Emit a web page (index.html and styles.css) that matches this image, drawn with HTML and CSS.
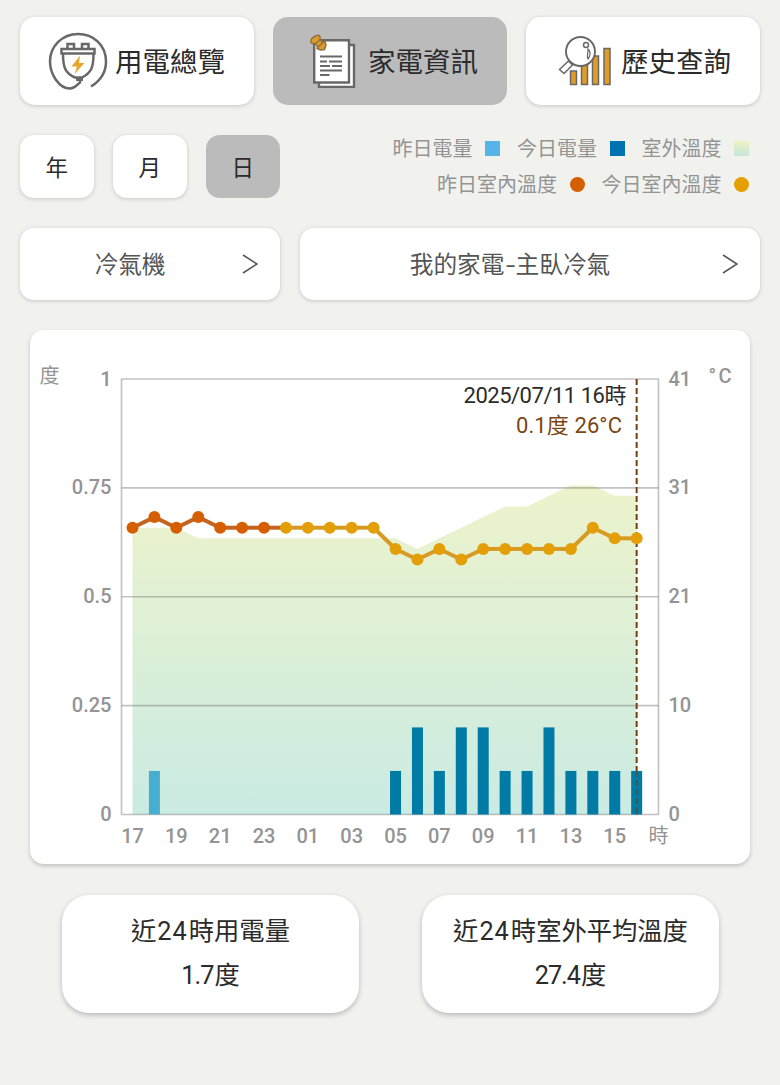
FILE: index.html
```
<!DOCTYPE html>
<html lang="zh-Hant">
<head>
    <meta charset="UTF-8">
    <meta name="viewport" content="width=device-width, initial-scale=1.0">
    <title>家電資訊</title>
    <link rel="stylesheet" href="styles.css">
</head>
<body>

    <nav class="tabs">
        <button class="tab">
            <svg class="tab-icon plug" width="60" height="60" viewBox="0 0 60 60" fill="none" stroke="#686868" stroke-width="2.5">
                <path d="M43 55.500 C52 50 58 41 58 30.500 C58 14 45.500 3 30 3 C14.500 3 2 15 2 30.500 C2 43 11 57.500 22 57.500 C27 57.500 28.500 54 32 51.500 V47"/>
                <path d="M15 23 C15 37 17.500 42 27 46.500 H34 C43 42 45.500 37 45.500 23"/>
                <path d="M13.500 18 H46.500 V22.500 H13.500 Z"/>
                <path d="M19.500 17 V13 H26 V17 M34 17 V13 H40.500 V17"/>
                <path d="M28 48 H35" stroke-width="4"/>
                <path d="M32 24.500 L23.500 35.500 H29 L26.500 43 L36.500 32 H31 Z" fill="#e6a62c" stroke="none"/>
            </svg>
            <span>用電總覽</span>
        </button>
        <button class="tab active">
            <svg class="tab-icon" width="46" height="54" viewBox="0 0 46 54" fill="#fff" stroke="#686868" stroke-width="2.400">
                <path d="M9 11 H44 V53 H9 Z"/>
                <path d="M4.200 6.200 H39 V48.500 H4.200 Z"/>
                <path d="M10 22.500 H32 M10 27.500 H17 M19 27.500 H32 M10 32 H20 M22 32 H32 M10 36.500 H32 M10 41 H19.500" stroke-width="1.800"/>
                <g fill="#dc9a2d" stroke="#8f713c" stroke-width="1.500">
                    <path d="M7 14.500 C7.500 10 10.500 7.500 15 7.500 L16 11 L14.500 15.500 L10.500 16 Z"/>
                    <path d="M4.500 9 L8 13 L13 8.500 L9 4.500 Z"/>
                    <ellipse cx="5.500" cy="5.500" rx="5.300" ry="3.200" transform="rotate(-38 5.500 5.500)"/>
                </g>
            </svg>
            <span>家電資訊</span>
        </button>
        <button class="tab">
            <svg class="tab-icon" width="54" height="50" viewBox="0 0 54 50" stroke="#686868" stroke-width="1.500">
                <path d="M12.500 35 H18.500 V48.500 H12.500 Z M23.500 28 H29.500 V48.500 H23.500 Z M34.500 20 H40.500 V48.500 H34.500 Z M46 12.500 H52 V48.500 H46 Z" fill="#e09c26"/>
                <path d="M10.500 25 L14.500 29 L6 37.500 L1.500 33.500 Z" fill="#fff"/>
                <circle cx="22.500" cy="15.500" r="14.500" fill="#fff" stroke-width="1.900"/>
                <circle cx="28" cy="9" r="2.500" fill="none"/>
                <path d="M30 13 C33 15.500 32.500 20 30 23 C28.500 22 30 19 30 13 Z" fill="none" stroke-width="1.200"/>
            </svg>
            <span>歷史查詢</span>
        </button>
    </nav>

    <div class="filters">
        <div class="ranges">
            <button class="range"><span>年</span></button>
            <button class="range"><span>月</span></button>
            <button class="range active"><span>日</span></button>
        </div>
        <div class="legend">
            <div class="legend-row">
                <span>昨日電量</span><i class="mark yesterday"></i>
                <span>今日電量</span><i class="mark today"></i>
                <span>室外溫度</span><i class="mark outdoor"></i>
            </div>
            <div class="legend-row">
                <span>昨日室內溫度</span><i class="mark dot yesterday-temp"></i>
                <span>今日室內溫度</span><i class="mark dot today-temp"></i>
            </div>
        </div>
    </div>

    <div class="selects">
        <button class="select">
            <span>冷氣機</span>
            <svg class="arrow" width="16" height="20" viewBox="0 0 16 20"><path d="M1 1 L15 10 L1 19"/></svg>
        </button>
        <button class="select">
            <span>我的家電<b class="dash">-</b>主臥冷氣</span>
            <svg class="arrow" width="16" height="20" viewBox="0 0 16 20"><path d="M1 1 L15 10 L1 19"/></svg>
        </button>
    </div>

    <div class="chart-card">
        <svg class="chart" id="chart" width="720" height="534" viewBox="0 0 720 534">
            <defs>
                <linearGradient id="outdoor" x1="0" y1="155" x2="0" y2="484" gradientUnits="userSpaceOnUse">
                    <stop offset="0" stop-color="#edf3cb"/>
                    <stop offset="1" stop-color="#caebe3"/>
                </linearGradient>
            </defs>
        </svg>
    </div>

    <div class="summary">
        <div class="summary-card">
            <div>近<span class="num">24</span>時用電量</div>
            <div><span class="value">1.7</span>度</div>
        </div>
        <div class="summary-card">
            <div>近<span class="num">24</span>時室外平均溫度</div>
            <div><span class="value">27.4</span>度</div>
        </div>
    </div>

    <script>
        const chart = document.getElementById('chart');
        const left = 91.5, right = 628.5, top0 = 49, bottom = 484.5;
        const firstX = 102.5, step = 21.92;

        // 17時 ~ 16時
        const usage = [0, 0.1, 0, 0, 0, 0, 0, 0, 0, 0, 0, 0, 0.1, 0.2, 0.1, 0.2, 0.2, 0.1, 0.1, 0.2, 0.1, 0.1, 0.1, 0.1];
        const indoor = [27, 28, 27, 28, 27, 27, 27, 27, 27, 27, 27, 27, 25, 24, 25, 24, 25, 25, 25, 25, 25, 27, 26, 26];
        const outdoor = [27, 27, 27, 26, 26, 26, 26, 26, 26, 26, 26, 26, 26, 25, 26, 27, 28, 29, 29, 30, 31, 31, 30, 30];
        const midnight = 7;

        const x = i => firstX + i * step;
        const tempY = t => bottom - t * (bottom - top0) / 41;
        const usageY = u => bottom - u * (bottom - top0);

        function draw(tag, attrs, text) {
            const el = document.createElementNS('http://www.w3.org/2000/svg', tag);
            for (let key in attrs) el.setAttribute(key, attrs[key]);
            if (text) el.textContent = text;
            chart.appendChild(el);
        }

        // outdoor temperature area
        const area = outdoor.map((t, i) => `${x(i)},${tempY(t)}`).join(' ');
        draw('polygon', { points: `${x(0)},${bottom} ${area} ${x(23)},${bottom}`, fill: 'url(#outdoor)' });

        // grid and axis labels
        const leftLabels = ['1', '0.75', '0.5', '0.25', '0'];
        const rightLabels = ['41', '31', '21', '10', '0'];
        leftLabels.forEach((label, i) => {
            const y = top0 + i * (bottom - top0) / 4;
            draw('line', { class: 'grid', x1: left, x2: right, y1: y, y2: y });
            draw('text', { class: 'label end', x: 81.5, y: y + 6.5 }, label);
            draw('text', { class: 'label', x: 638.5, y: y + 6.5 }, rightLabels[i]);
        });
        draw('line', { class: 'grid', x1: left, x2: left, y1: top0, y2: bottom });
        draw('line', { class: 'grid', x1: right, x2: right, y1: top0, y2: bottom });

        for (let i = 0; i < 24; i += 2) {
            draw('text', { class: 'label middle', x: x(i), y: 513 }, String((17 + i) % 24).padStart(2, '0'));
        }
        draw('text', { class: 'label unit middle', x: 628.5, y: 513 }, '時');
        draw('text', { class: 'label unit', x: 9.5, y: 53 }, '度');
        draw('text', { class: 'label', x: 678.5, y: 53, textLength: 23 }, '°C');

        // selected hour
        draw('line', { class: 'cursor', x1: x(23), x2: x(23), y1: top0, y2: bottom });

        usage.forEach((u, i) => {
            if (!u) return;
            draw('rect', { class: i < midnight ? 'bar old' : 'bar', x: x(i) - 5.5, y: usageY(u), width: 11, height: bottom - usageY(u) });
        });
        draw('line', { class: 'cursor faded', x1: x(23), x2: x(23), y1: usageY(0.1), y2: bottom });

        // indoor temperature
        for (let i = 0; i < 23; i++) {
            draw('line', { class: i < midnight ? 'temp old' : 'temp', x1: x(i), y1: tempY(indoor[i]), x2: x(i + 1), y2: tempY(indoor[i + 1]) });
        }
        indoor.forEach((t, i) => {
            draw('circle', { class: i < midnight ? 'point old' : 'point', cx: x(i), cy: tempY(t), r: 6 });
        });

        draw('text', { class: 'tip', x: 433.5, y: 73, textLength: 163 }, '2025/07/11 16時');
        draw('text', { class: 'tip reading', x: 486, y: 102.5, textLength: 106 }, '0.1度 26°C');
    </script>

</body>
</html>
```

FILE: styles.css
```
* {
    box-sizing: border-box;
}

body {
    margin: 0;
    padding: 17px 20px 0;
    min-height: 1085px;
    background-color: #f1f2ee;
    font-family: Roboto, "Noto Sans CJK TC", sans-serif;
    color: #2b2b2b;
}

button {
    border: none;
    padding: 0;
    font-family: inherit;
    color: inherit;
    background-color: #fff;
    box-shadow: 0 1px 4px rgba(0, 0, 0, 0.18);
    cursor: pointer;
}

.tabs {
    display: grid;
    grid-template-columns: repeat(3, 1fr);
    gap: 19px;
}

.tab {
    display: flex;
    justify-content: flex-end;
    align-items: center;
    gap: 12px;
    height: 88px;
    padding-right: 29px;
    border-radius: 15px;
    font-size: 27.5px;
}

.tab span {
    padding-bottom: 3px;
}

.plug {
    margin-right: -5px;
}

.tab:last-child .tab-icon {
    margin-right: -3px;
}

.tab.active,
.range.active {
    background-color: #bbb;
    box-shadow: none;
}

.filters {
    display: flex;
    justify-content: space-between;
    height: 63px;
    margin-top: 30px;
}

.ranges {
    display: flex;
    gap: 19.5px;
}

.range {
    width: 73.5px;
    height: 63px;
    padding-bottom: 2px;
    border-radius: 14px;
    font-size: 22.5px;
}

.legend {
    padding-right: 11px;
    color: #949494;
    font-size: 20px;
}

.legend-row {
    display: flex;
    justify-content: flex-end;
    align-items: center;
    height: 36px;
    margin-top: -5px;
}

.legend-row + .legend-row {
    margin-top: 0;
}

.legend-row span {
    padding-bottom: 2px;
}

.mark {
    width: 15px;
    height: 15px;
    margin: 0 17px 0 12.5px;
}

.mark:last-child {
    margin-right: 0;
}

.dot {
    border-radius: 50%;
}

.yesterday {
    background-color: #56b4e6;
}

.today {
    background-color: #0072b0;
}

.outdoor {
    background: linear-gradient(#edf3c0, #c5e6dc);
}

.yesterday-temp {
    background-color: #d55e00;
}

.today-temp {
    background-color: #e69f00;
}

.selects {
    display: grid;
    grid-template-columns: 260px 1fr;
    gap: 20px;
    margin-top: 30px;
}

.select {
    display: flex;
    align-items: center;
    height: 72px;
    padding-right: 22px;
    border-radius: 14px;
    font-size: 23.7px;
    color: #555;
}

.select span {
    flex: 1;
    padding: 0 2px 2px 0;
}

.dash {
    display: inline-block;
    width: 11px;
    font-weight: normal;
    transform: scaleX(1.4);
}

.arrow path {
    fill: none;
    stroke: #555;
    stroke-width: 1.5;
}

.chart-card {
    height: 534px;
    margin: 30px 10px 0;
    border-radius: 14px;
    background-color: #fff;
    box-shadow: 0 2px 4px rgba(0, 0, 0, 0.2);
}

.chart {
    display: block;
}

.grid {
    stroke: #777;
    stroke-opacity: 0.45;
    stroke-width: 1.6;
}

.label {
    fill: #949494;
    font-size: 20px;
    font-weight: 500;
}

.unit {
    font-weight: normal;
}

.end {
    text-anchor: end;
}

.middle {
    text-anchor: middle;
}

.bar {
    fill: #007ba6;
}

.bar.old {
    fill: #48aed1;
}

.temp {
    stroke: #d79a22;
    stroke-width: 4;
}

.temp.old {
    stroke: #c56420;
}

.point {
    fill: #e39f08;
}

.point.old {
    fill: #d55e00;
}

.cursor {
    stroke: #70400f;
    stroke-width: 2;
    stroke-dasharray: 6 3;
}

.cursor.faded {
    stroke-opacity: 0.6;
}

.tip {
    fill: #2b2b2b;
    font-size: 22px;
}

.tip.reading {
    fill: #7a4612;
}

.summary {
    display: flex;
    justify-content: space-between;
    margin: 31px 41px 0 42px;
}

.summary-card {
    width: 297px;
    height: 118px;
    padding-top: 15px;
    border-radius: 27px;
    background-color: #fff;
    box-shadow: 0 2px 5px rgba(0, 0, 0, 0.24);
    text-align: center;
    font-size: 25.3px;
    line-height: 44px;
}

.num {
    margin: 0 1px;
    letter-spacing: 1px;
}

.value {
    margin-right: 1px;
    letter-spacing: -1px;
}
```
